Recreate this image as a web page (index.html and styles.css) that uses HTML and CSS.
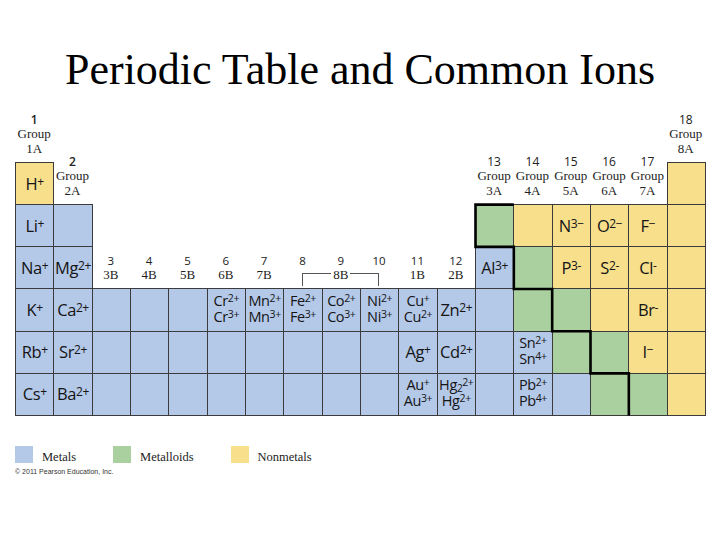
FILE: index.html
```html
<!DOCTYPE html>
<html>
<head>
<meta charset="utf-8">
<link rel="stylesheet" href="styles.css">
</head>
<body>
<h1 class="title">Periodic Table and Common Ions</h1>
<div class="table">
  <!-- header row -->
  <div class="lab"><span class="num b">1</span><span>Group</span><span>1A</span></div>
  <div class="span16"></div>
  <div class="lab"><span class="num">18</span><span>Group</span><span>8A</span></div>

  <!-- row 1 -->
  <div class="c n"><span>H<sup>+</sup></span></div>
  <div class="lab"><span class="num b">2</span><span>Group</span><span>2A</span></div>
  <div class="span10"></div>
  <div class="lab"><span class="num">13</span><span>Group</span><span>3A</span></div>
  <div class="lab"><span class="num">14</span><span>Group</span><span>4A</span></div>
  <div class="lab"><span class="num">15</span><span>Group</span><span>5A</span></div>
  <div class="lab"><span class="num">16</span><span>Group</span><span>6A</span></div>
  <div class="lab"><span class="num">17</span><span>Group</span><span>7A</span></div>
  <div class="c n"></div>

  <!-- row 2 -->
  <div class="c m"><span>Li<sup>+</sup></span></div>
  <div class="c m"></div>
  <div class="span10"></div>
  <div class="c g"></div>
  <div class="c n"></div>
  <div class="c n"><span>N<sup>3−</sup></span></div>
  <div class="c n"><span>O<sup>2−</sup></span></div>
  <div class="c n"><span>F<sup>−</sup></span></div>
  <div class="c n"></div>

  <!-- row 3 -->
  <div class="c m"><span>Na<sup>+</sup></span></div>
  <div class="c m"><span>Mg<sup>2+</sup></span></div>
  <div class="tlabels">
    <span class="num">3</span><span class="num">4</span><span class="num">5</span><span class="num">6</span><span class="num">7</span>
    <span class="num">8</span><span class="num">9</span><span class="num">10</span><span class="num">11</span><span class="num">12</span>
    <span>3B</span><span>4B</span><span>5B</span><span>6B</span><span>7B</span>
    <div class="bracket"><span>8B</span></div>
    <span>1B</span><span>2B</span>
  </div>
  <div class="c m"><span>Al<sup>3+</sup></span></div>
  <div class="c g"></div>
  <div class="c n"><span>P<sup>3-</sup></span></div>
  <div class="c n"><span>S<sup>2-</sup></span></div>
  <div class="c n"><span>Cl<sup>-</sup></span></div>
  <div class="c n"></div>

  <!-- row 4 -->
  <div class="c m"><span>K<sup>+</sup></span></div>
  <div class="c m"><span>Ca<sup>2+</sup></span></div>
  <div class="c m"></div>
  <div class="c m"></div>
  <div class="c m"></div>
  <div class="c m two"><span>Cr<sup>2+</sup></span><span>Cr<sup>3+</sup></span></div>
  <div class="c m two"><span>Mn<sup>2+</sup></span><span>Mn<sup>3+</sup></span></div>
  <div class="c m two"><span>Fe<sup>2+</sup></span><span>Fe<sup>3+</sup></span></div>
  <div class="c m two"><span>Co<sup>2+</sup></span><span>Co<sup>3+</sup></span></div>
  <div class="c m two"><span>Ni<sup>2+</sup></span><span>Ni<sup>3+</sup></span></div>
  <div class="c m two"><span>Cu<sup>+</sup></span><span>Cu<sup>2+</sup></span></div>
  <div class="c m"><span>Zn<sup>2+</sup></span></div>
  <div class="c m"></div>
  <div class="c g"></div>
  <div class="c g"></div>
  <div class="c n"></div>
  <div class="c n"><span>Br<sup>-</sup></span></div>
  <div class="c n"></div>

  <!-- row 5 -->
  <div class="c m"><span>Rb<sup>+</sup></span></div>
  <div class="c m"><span>Sr<sup>2+</sup></span></div>
  <div class="c m"></div>
  <div class="c m"></div>
  <div class="c m"></div>
  <div class="c m"></div>
  <div class="c m"></div>
  <div class="c m"></div>
  <div class="c m"></div>
  <div class="c m"></div>
  <div class="c m"><span>Ag<sup>+</sup></span></div>
  <div class="c m"><span>Cd<sup>2+</sup></span></div>
  <div class="c m"></div>
  <div class="c m two"><span>Sn<sup>2+</sup></span><span>Sn<sup>4+</sup></span></div>
  <div class="c g"></div>
  <div class="c g"></div>
  <div class="c n"><span>I<sup>−</sup></span></div>
  <div class="c n"></div>

  <!-- row 6 -->
  <div class="c m"><span>Cs<sup>+</sup></span></div>
  <div class="c m"><span>Ba<sup>2+</sup></span></div>
  <div class="c m"></div>
  <div class="c m"></div>
  <div class="c m"></div>
  <div class="c m"></div>
  <div class="c m"></div>
  <div class="c m"></div>
  <div class="c m"></div>
  <div class="c m"></div>
  <div class="c m two"><span>Au<sup>+</sup></span><span>Au<sup>3+</sup></span></div>
  <div class="c m two"><span>Hg<sub>2</sub><sup>2+</sup></span><span>Hg<sup>2+</sup></span></div>
  <div class="c m"></div>
  <div class="c m two"><span>Pb<sup>2+</sup></span><span>Pb<sup>4+</sup></span></div>
  <div class="c m"></div>
  <div class="c g"></div>
  <div class="c g"></div>
  <div class="c n"></div>

  <svg class="stair" width="691" height="309" viewBox="0 0 691 309">
    <polyline points="498.83,96.67 460.5,96.67 460.5,138.84 498.83,138.84 498.83,181.01 537.17,181.01 537.17,223.18 575.5,223.18 575.5,265.35 613.83,265.35 613.83,307.5" fill="none" stroke="#000" stroke-width="2.6" stroke-linejoin="miter"/>
  </svg>
</div>

<div class="legend">
  <div class="item"><span class="sw m"></span><span>Metals</span></div>
  <div class="item"><span class="sw g"></span><span>Metalloids</span></div>
  <div class="item"><span class="sw n"></span><span>Nonmetals</span></div>
</div>
<div class="copy">© 2011 Pearson Education, Inc.</div>
</body>
</html>
```
FILE: styles.css
```css
* { box-sizing: border-box; }

body {
  margin: 0;
  width: 720px;
  height: 540px;
  overflow: hidden;
  background: #fff;
  font-family: "Open Sans", sans-serif;
  color: #151515;
}

.title {
  margin: 0;
  padding-top: 45px;
  font: normal 44px/50px "Liberation Serif", serif;
  text-align: center;
  color: #000;
}

.table {
  position: relative;
  margin: 13px 0 0 15px;
  width: 690px;
  display: grid;
  grid-template-columns: repeat(18, 38.333px);
  grid-template-rows: 54px repeat(6, 42.17px);
}

.c {
  margin: 0 -1px -1px 0;
  border: 1px solid #3b3b3b;
  display: flex;
  flex-direction: column;
  align-items: center;
  justify-content: center;
  font-size: 16.5px;
  line-height: 18px;
  letter-spacing: -0.4px;
  white-space: nowrap;
}

.m { background: #b4c8e8; }
.g { background: #a9d09e; }
.n { background: #f7df8c; }

.two {
  font-size: 14.5px;
  line-height: 16.5px;
  padding-bottom: 2px;
}

sup {
  font-size: 12px;
  line-height: 0;
  vertical-align: 4.5px;
}

.two sup {
  font-size: 10.5px;
  vertical-align: 4px;
}

sub {
  font-size: 10px;
  line-height: 0;
  vertical-align: -2px;
}

.lab {
  align-self: end;
  display: flex;
  flex-direction: column;
  align-items: center;
  padding-bottom: 6px;
  font: 13px/14.5px "Liberation Serif", serif;
  color: #222;
}

.num {
  font: 12px/14.5px "Open Sans", sans-serif;
}

.num.b { font-weight: 600; }

.span16 { grid-column: span 16; }
.span10 { grid-column: span 10; }

.tlabels {
  grid-column: span 10;
  align-self: end;
  display: grid;
  grid-template-columns: repeat(10, 1fr);
  grid-template-rows: 14px 14px;
  padding-bottom: 6px;
  text-align: center;
  font: 13px/14px "Liberation Serif", serif;
  color: #222;
}

.tlabels .num { font-size: 11.5px; line-height: 14px; }

.bracket {
  grid-column: span 3;
  align-self: start;
  margin: 5px 19px 0;
  height: 13px;
  border: 1px solid #555;
  border-bottom: none;
  display: flex;
  justify-content: center;
}

.bracket span {
  background: #fff;
  padding: 0 2px;
  margin-top: -6px;
  height: 13.5px;
}

.stair {
  position: absolute;
  left: 0;
  top: 0;
  overflow: visible;
  pointer-events: none;
}

.legend {
  display: flex;
  align-items: flex-end;
  gap: 37px;
  margin: 31px 0 0 15px;
}

.item {
  display: flex;
  align-items: flex-end;
  gap: 9px;
  font: 12.5px/12px "Liberation Serif", serif;
  color: #222;
}

.sw {
  width: 18px;
  height: 17px;
}

.copy {
  margin: 5px 0 0 15px;
  font: 7px/8px "Liberation Sans", Arial, sans-serif;
  color: #333;
}
```
